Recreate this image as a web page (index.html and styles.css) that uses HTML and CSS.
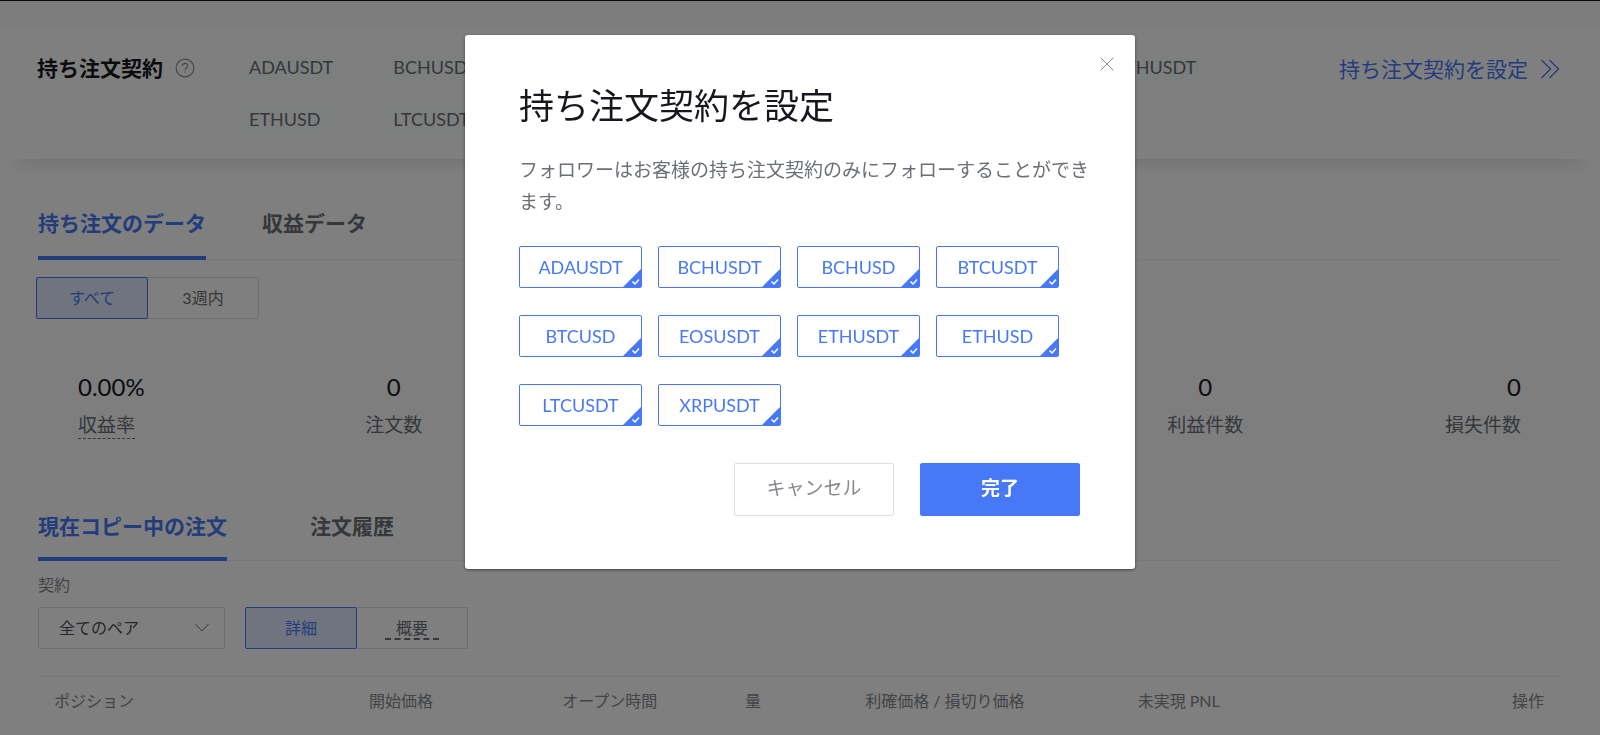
FILE: index.html
```html
<!DOCTYPE html>
<html lang="ja">
<head>
    <meta charset="UTF-8">
    <meta name="viewport" content="width=device-width, initial-scale=1.0">
    <title>持ち注文契約を設定</title>
    <link rel="stylesheet" href="styles.css">
</head>
<body>

    <!-- Shared icons -->
    <svg class="sprite" aria-hidden="true">
        <symbol id="corner-check" viewBox="0 0 18 18">
            <path d="M18 0v18H0z" fill="#4779f7"/>
            <path d="M9.5 12.5l2.5 2.5 4-4.5" fill="none" stroke="#fff" stroke-width="1.5"/>
        </symbol>
    </svg>

    <div class="page">
        <div class="topbar"></div>

        <!-- Contracts -->
        <section class="contracts">
            <h2 class="contracts-title">
                持ち注文契約
                <svg class="help" viewBox="0 0 20 20" fill="none" stroke="currentColor" stroke-width="1.2">
                    <circle cx="10" cy="10" r="8.9"/>
                    <path d="M7.4 8.1c0-1.6 1.1-2.7 2.6-2.7s2.6 1 2.6 2.4c0 1.9-2.6 2-2.6 4.4M10 13.4v1.4"/>
                </svg>
            </h2>
            <ul class="tags">
                <li>ADAUSDT</li>
                <li>BCHUSDT</li>
                <li>BCHUSD</li>
                <li>BTCUSDT</li>
                <li>BTCUSD</li>
                <li>EOSUSDT</li>
                <li>ETHUSDT</li>
                <li>ETHUSD</li>
                <li>LTCUSDT</li>
            </ul>
            <a class="contracts-link" href="#">
                持ち注文契約を設定
                <svg class="arrows" viewBox="0 0 20 20" fill="none" stroke="currentColor" stroke-width="1.3">
                    <path d="M1.5 1l9 9-9 9M9.500 1l9 9-9 9"/>
                </svg>
            </a>
        </section>

        <main class="content">
            <nav class="tabs">
                <a class="tab active" href="#">持ち注文のデータ</a>
                <a class="tab" href="#">収益データ</a>
            </nav>

            <div class="segment">
                <button class="segment-btn active" type="button">すべて</button>
                <button class="segment-btn" type="button">3週内</button>
            </div>

            <!-- Stats -->
            <dl class="stats">
                <div class="stat"><dd>0.00%</dd><dt class="dashed">収益率</dt></div>
                <div class="stat"><dd>0</dd><dt>注文数</dt></div>
                <div class="stat profit"><dd>0</dd><dt>利益件数</dt></div>
                <div class="stat"><dd>0</dd><dt>損失件数</dt></div>
            </dl>

            <nav class="tabs orders-tabs">
                <a class="tab active" href="#">現在コピー中の注文</a>
                <a class="tab" href="#">注文履歴</a>
            </nav>

            <!-- Filters -->
            <label class="filter-label" for="pair">契約</label>
            <div class="filters">
                <div class="select-wrap">
                    <select id="pair" class="select">
                        <option>全てのペア</option>
                    </select>
                    <svg class="chevron" viewBox="0 0 14 9" fill="none" stroke="currentColor">
                        <path d="M.5 1L7 8l6.500-7"/>
                    </svg>
                </div>
                <div class="segment">
                    <button class="segment-btn active" type="button">詳細</button>
                    <button class="segment-btn" type="button"><span class="hint">概要</span></button>
                </div>
            </div>

            <table class="orders">
                <thead>
                    <tr>
                        <th class="col-position">ポジション</th>
                        <th class="col-price">開始価格</th>
                        <th class="col-time">オープン時間</th>
                        <th class="col-amount">量</th>
                        <th class="col-limit">利確価格 / 損切り価格</th>
                        <th>未実現 PNL</th>
                        <th class="col-action">操作</th>
                    </tr>
                </thead>
            </table>
        </main>
    </div>

    <!-- Dialog -->
    <div class="overlay">
        <form class="modal" role="dialog" aria-labelledby="modal-title">
            <button class="close" type="button" aria-label="閉じる">
                <svg viewBox="0 0 14 14" fill="none" stroke="currentColor">
                    <path d="M.7.7l12.600 12.600M13.300.7L.7 13.300"/>
                </svg>
            </button>
            <h1 class="modal-title" id="modal-title">持ち注文契約を設定</h1>
            <p class="modal-text">フォロワーはお客様の持ち注文契約のみにフォローすることができます。</p>
            <div class="options">
                <label class="option"><input type="checkbox" checked>ADAUSDT<svg><use href="#corner-check"/></svg></label>
                <label class="option"><input type="checkbox" checked>BCHUSDT<svg><use href="#corner-check"/></svg></label>
                <label class="option"><input type="checkbox" checked>BCHUSD<svg><use href="#corner-check"/></svg></label>
                <label class="option"><input type="checkbox" checked>BTCUSDT<svg><use href="#corner-check"/></svg></label>
                <label class="option"><input type="checkbox" checked>BTCUSD<svg><use href="#corner-check"/></svg></label>
                <label class="option"><input type="checkbox" checked>EOSUSDT<svg><use href="#corner-check"/></svg></label>
                <label class="option"><input type="checkbox" checked>ETHUSDT<svg><use href="#corner-check"/></svg></label>
                <label class="option"><input type="checkbox" checked>ETHUSD<svg><use href="#corner-check"/></svg></label>
                <label class="option"><input type="checkbox" checked>LTCUSDT<svg><use href="#corner-check"/></svg></label>
                <label class="option"><input type="checkbox" checked>XRPUSDT<svg><use href="#corner-check"/></svg></label>
            </div>
            <div class="actions">
                <button class="btn" type="button">キャンセル</button>
                <button class="btn primary" type="submit">完了</button>
            </div>
        </form>
    </div>

</body>
</html>
```
FILE: styles.css
```css
* {
    box-sizing: border-box;
}

body {
    margin: 0;
    background: #fff;
    color: #16181e;
    font-family: Lato, "Noto Sans CJK JP", sans-serif;
    font-size: 16px;
    line-height: 24px;
}

h1, h2, p, ul, dl, dd {
    margin: 0;
    padding: 0;
}

button, select {
    font: inherit;
    color: inherit;
}

a {
    color: inherit;
    text-decoration: none;
}

.sprite {
    position: absolute;
    width: 0;
    height: 0;
}

/* Contracts */
.topbar {
    height: 28px;
    background: #fafafa;
    border-top: 1px solid #16101a;
}

.contracts {
    display: flex;
    align-items: flex-start;
    padding: 23px 40px 24px 37px;
    box-shadow: 0 18px 20px -16px rgba(0, 0, 0, 0.14);
}

.contracts-title {
    display: flex;
    align-items: center;
    gap: 12px;
    width: 198px;
    font-size: 21px;
    font-weight: 700;
    line-height: 34px;
}

.help {
    width: 20px;
    height: 20px;
    color: #8d9095;
}

.tags {
    flex: 1;
    display: grid;
    grid-template-columns: repeat(7, 1fr);
    gap: 20px 0;
    margin-right: 94px;
    list-style: none;
    color: #6b6f76;
    font-size: 18px;
    line-height: 32px;
}

.tags li {
    justify-self: start;
    padding: 0 14px;
    background: #fbfcfd;
}

.contracts-link {
    display: flex;
    align-items: center;
    gap: 12px;
    color: #4779f7;
    font-size: 21px;
    line-height: 36px;
}

.arrows {
    width: 20px;
    height: 20px;
}

/* Tabs */
.content {
    padding: 49px 40px 0 38px;
}

.tabs {
    display: flex;
    gap: 56px;
    border-bottom: 1px solid #f0f1f3;
    color: #6b6f76;
    font-size: 21px;
    font-weight: 700;
    line-height: 30px;
}

.tab {
    margin-bottom: -1px;
    padding-bottom: 18px;
    border-bottom: 4px solid transparent;
}

.tab.active {
    color: #4779f7;
    border-color: #4779f7;
}

.orders-tabs {
    gap: 83px;
    margin-top: 34px;
}

.orders-tabs .tab {
    padding-bottom: 16px;
}

/* Segmented buttons */
.segment {
    display: flex;
}

.segment-btn {
    width: 111px;
    height: 42px;
    padding: 0;
    background: none;
    border: 1px solid #d9dbde;
    border-left: 0;
    border-radius: 0 2px 2px 0;
    color: #6b6f76;
}

.segment-btn.active {
    width: 112px;
    background: #dfe9fd;
    border: 1px solid #4779f7;
    border-radius: 2px;
    color: #4779f7;
}

.tabs + .segment {
    margin: 17px 0 0 -2px;
}

.hint {
    padding: 0 11px 1px;
    border-bottom: 2px dashed #6b6f76;
}

/* Stats */
.stats {
    display: grid;
    grid-template-columns: 21fr 21fr 20fr 20fr 20fr 21fr 21fr;
    margin-top: 17px;
    padding: 35px 39px 38px 40px;
    background: #fcfcfd;
    text-align: center;
}

.stat {
    display: flex;
    flex-direction: column;
    align-items: center;
    gap: 8px;
}

.stat:first-child {
    align-items: flex-start;
}

.stat:last-child {
    align-items: flex-end;
}

.stat.profit {
    grid-column: 6;
}

.stat dd {
    font-size: 24px;
    line-height: 32px;
}

.stat dt {
    color: #6b6f76;
    font-size: 19px;
    line-height: 28px;
}

.stat .dashed {
    height: 28px;
    border-bottom: 1px dashed #6b6f76;
}

/* Filters */
.filter-label {
    display: block;
    margin: 12px 0 10px;
    color: #84888e;
}

.filters {
    display: flex;
    gap: 20px;
}

.select-wrap {
    position: relative;
}

.select {
    width: 187px;
    height: 42px;
    padding: 0 20px;
    appearance: none;
    background: none;
    border: 1px solid #d9dbde;
    border-radius: 2px;
    color: #4c4f55;
}

.chevron {
    position: absolute;
    top: 16px;
    right: 16px;
    width: 14px;
    height: 9px;
    color: #6b6f76;
}

/* Orders */
.orders {
    width: 100%;
    margin-top: 27px;
    border-collapse: collapse;
    border-top: 1px solid #f0f1f3;
    table-layout: fixed;
}

.orders th {
    height: 48px;
    padding: 0 16px;
    color: #84888e;
    font-weight: 400;
    text-align: left;
    white-space: nowrap;
}

.orders .col-position {
    width: 20.7%;
}

.orders .col-price {
    width: 12.7%;
}

.orders .col-time {
    width: 12%;
}

.orders .col-amount {
    width: 7.9%;
}

.orders .col-limit {
    width: 17.9%;
}

.orders .col-action {
    text-align: right;
}

/* Dialog */
.overlay {
    position: fixed;
    inset: 0;
    display: flex;
    justify-content: center;
    align-items: flex-start;
    padding-top: 35px;
    background: rgba(0, 0, 0, 0.5);
}

.modal {
    position: relative;
    width: 670px;
    padding: 45px 55px 53px 54px;
    background: #fff;
    border-radius: 3px;
    box-shadow: 0 1px 3px rgba(0, 0, 0, 0.5);
}

.close {
    position: absolute;
    top: 22px;
    right: 21px;
    width: 14px;
    height: 14px;
    padding: 0;
    background: none;
    border: 0;
    color: #84888e;
}

.close svg {
    display: block;
}

.modal-title {
    font-size: 35px;
    font-weight: 400;
    line-height: 50px;
}

.modal-text {
    margin: 24px -12px 28px 0;
    color: #6b6f76;
    font-size: 19px;
    line-height: 32px;
}

.options {
    display: grid;
    grid-template-columns: repeat(4, 123px);
    gap: 27px 16px;
}

.option {
    position: relative;
    height: 42px;
    border: 1px solid #4779f7;
    border-radius: 2px;
    color: #4779f7;
    font-size: 18px;
    line-height: 40px;
    text-align: center;
}

.option input {
    position: absolute;
    opacity: 0;
}

.option svg {
    position: absolute;
    right: 0;
    bottom: 0;
    width: 18px;
    height: 18px;
}

.option input:not(:checked) ~ svg {
    display: none;
}

.actions {
    display: flex;
    justify-content: flex-end;
    gap: 26px;
    margin-top: 37px;
}

.btn {
    width: 160px;
    height: 53px;
    padding: 0 0 3px;
    background: #fff;
    border: 1px solid #dfe0e2;
    border-radius: 2px;
    color: #84888e;
    font-size: 19px;
}

.btn.primary {
    background: #4779f7;
    border-color: #4779f7;
    color: #fff;
    font-weight: 700;
}
```
